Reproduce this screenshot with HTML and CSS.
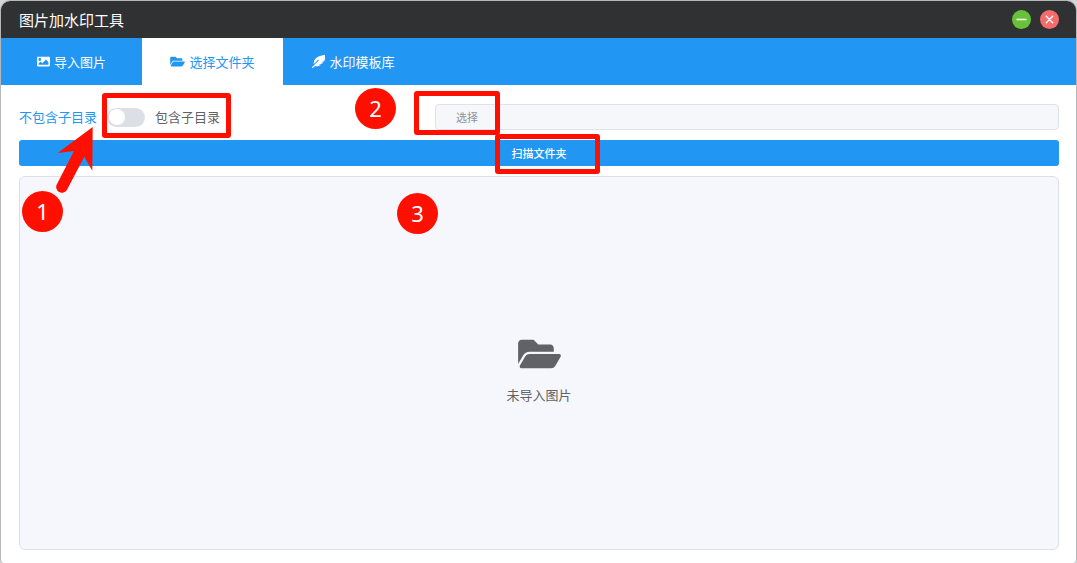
FILE: index.html
```html
<!DOCTYPE html>
<html lang="zh-CN">
<head>
  <meta charset="UTF-8" />
  <meta name="viewport" content="width=device-width, initial-scale=1" />
  <title>图片加水印工具</title>
  <link rel="stylesheet" href="styles.css">
</head>
<body>
  <div class="window">
    <header class="titlebar">
      <h1>图片加水印工具</h1>
      <div class="window-actions">
        <button type="button" class="round minimize" aria-label="最小化">
          <svg viewBox="0 0 19 19"><path d="M5 9.500h9" /></svg>
        </button>
        <button type="button" class="round close" aria-label="关闭">
          <svg viewBox="0 0 19 19"><path d="M6.300 6.300l6.400 6.400M12.700 6.300l-6.400 6.400" /></svg>
        </button>
      </div>
    </header>

    <nav class="tabs">
      <a href="#import" class="tab">
        <svg class="icon" viewBox="0 0 512 512"><path d="M464 448H48c-26.51 0-48-21.49-48-48V112c0-26.51 21.49-48 48-48h416c26.51 0 48 21.49 48 48v288c0 26.51-21.49 48-48 48zM112 120c-30.928 0-56 25.072-56 56s25.072 56 56 56 56-25.072 56-56-25.072-56-56-56zM64 384h384V272l-87.515-87.515c-4.686-4.686-12.284-4.686-16.971 0L208 320l-55.515-55.515c-4.686-4.686-12.284-4.686-16.971 0L64 336v48z" /></svg>
        <span>导入图片</span>
      </a>
      <a href="#folder" class="tab active">
        <svg class="icon wide" viewBox="0 0 576 512"><path d="M572.694 292.093L500.27 416.248A63.997 63.997 0 0 1 444.989 448H45.025c-18.523 0-30.064-20.093-20.731-36.093l72.424-124.155A64 64 0 0 1 152 256h399.964c18.523 0 30.064 20.093 20.73 36.093zM152 224h328v-48c0-26.51-21.49-48-48-48H272l-64-64H48C21.49 64 0 85.49 0 112v278.046l69.077-118.418C86.214 242.25 117.989 224 152 224z" /></svg>
        <span>选择文件夹</span>
      </a>
      <a href="#templates" class="tab">
        <svg class="icon" viewBox="0 0 512 512"><path d="M512 0C460.22 3.56 96.44 38.2 71.01 287.61c-3.09 26.66-4.84 53.44-5.99 80.24l178.87-178.69c6.25-6.25 16.4-6.25 22.65 0s6.25 16.38 0 22.63L7.04 471.03c-9.38 9.37-9.38 24.57 0 33.94 9.38 9.37 24.6 9.37 33.98 0l66.1-66.03C159.42 454.65 279 457.11 353 384h-98.19l147.57-49.14c49.99-49.93 36.38-36.18 46.31-46.86h-97.78l131.54-43.8C527.16 145.61 515.41 39.33 512 0z" /></svg>
        <span>水印模板库</span>
      </a>
    </nav>

    <main class="content">
      <div class="options">
        <div class="subdir">
          <label for="subdir" class="off">不包含子目录</label>
          <input type="checkbox" role="switch" id="subdir" class="switch">
          <label for="subdir">包含子目录</label>
          <span class="mark mark-switch"></span>
          <svg class="arrow" viewBox="0 0 40 68"><path d="M36.7 2L1.7 28L18 26L0.9 59.2A5.7 5.7 0 0 0 11 64.8L28.3 31.7L36.3 45.7Z" /></svg>
          <span class="step step-1">1</span>
          <span class="step step-2">2</span>
        </div>
        <div class="picker">
          <button type="button" class="choose">选择</button>
          <input type="text" class="path" aria-label="文件夹路径" readonly>
          <span class="mark mark-choose"></span>
        </div>
      </div>

      <button type="button" class="scan">扫描文件夹<span class="mark mark-scan"></span></button>

      <section class="empty">
        <svg class="empty-icon" viewBox="0 0 576 512"><path d="M572.694 292.093L500.27 416.248A63.997 63.997 0 0 1 444.989 448H45.025c-18.523 0-30.064-20.093-20.731-36.093l72.424-124.155A64 64 0 0 1 152 256h399.964c18.523 0 30.064 20.093 20.73 36.093zM152 224h328v-48c0-26.51-21.49-48-48-48H272l-64-64H48C21.49 64 0 85.49 0 112v278.046l69.077-118.418C86.214 242.25 117.989 224 152 224z" /></svg>
        <p>未导入图片</p>
        <span class="step step-3">3</span>
      </section>
    </main>
  </div>
</body>
</html>
```
FILE: styles.css
```css
* {
  box-sizing: border-box;
}

body {
  margin: 0;
  background: #d4d6d8;
  color: #606266;
  font-family: "Noto Sans", "Noto Sans CJK SC", sans-serif;
  font-size: 13px;
  line-height: 20px;
}

button, input {
  margin: 0;
  font-family: inherit;
}

.window {
  display: flex;
  flex-direction: column;
  min-height: 100vh;
  border: 1px solid #b5b7b9;
  border-bottom: 0;
  border-radius: 10px 10px 4px 4px;
  overflow: hidden;
  background: #fff;
}

.titlebar {
  display: flex;
  align-items: center;
  justify-content: space-between;
  height: 37px;
  padding: 0 17px 0 18px;
  background: #303133;
}

.titlebar h1 {
  margin: 0;
  color: #fff;
  font-size: 15px;
  font-weight: 400;
}

.window-actions {
  display: flex;
  gap: 9px;
}

.round {
  width: 19px;
  height: 19px;
  padding: 0;
  border: 0;
  border-radius: 50%;
}

.round svg {
  display: block;
  fill: none;
  stroke: #fff;
  stroke-width: 1.3;
  stroke-linecap: round;
}

.minimize {
  background: #67c23a;
}

.close {
  background: #f56c6c;
}

.tabs {
  display: flex;
  background: #2196f3;
}

.tab {
  display: flex;
  align-items: center;
  justify-content: center;
  gap: 4px;
  width: 141px;
  height: 47px;
  color: #fff;
  text-decoration: none;
}

.tab.active {
  background: #fff;
  color: #2196f3;
}

.icon {
  width: 13px;
  height: 13px;
  fill: currentColor;
}

.icon.wide {
  width: 15px;
}

.content {
  flex: 1;
  display: flex;
  flex-direction: column;
  gap: 10px;
  padding: 19px 17px 13px 18px;
}

.options {
  display: grid;
  grid-template-columns: 2fr 3fr;
}

.subdir {
  position: relative;
  display: flex;
  align-items: center;
  gap: 10px;
}

.off {
  color: #2196f3;
}

.switch {
  appearance: none;
  display: flex;
  align-items: center;
  width: 38px;
  height: 19px;
  padding: 0 2px;
  border-radius: 10px;
  background: #dcdfe6;
}

.switch::before {
  content: "";
  width: 16px;
  height: 16px;
  border-radius: 50%;
  background: #fff;
}

.switch:checked {
  justify-content: flex-end;
  background: #2196f3;
}

.picker {
  position: relative;
  display: flex;
  height: 26px;
  border: 1px solid #dfe2e9;
  border-radius: 4px;
  background: #f5f7fa;
}

.choose {
  padding: 0 20px;
  border: 0;
  border-right: 1px solid #dcdfe6;
  background: none;
  color: #909399;
  font-size: 11px;
}

.path {
  flex: 1;
  min-width: 0;
  padding: 0 10px;
  border: 0;
  background: none;
}

.scan {
  position: relative;
  height: 26px;
  border: 0;
  border-radius: 3px;
  background: #2196f3;
  color: #fff;
  font-size: 11px;
  font-weight: 500;
}

.empty {
  position: relative;
  flex: 1;
  display: flex;
  flex-direction: column;
  align-items: center;
  justify-content: center;
  gap: 12px;
  padding-top: 14px;
  border: 1px solid #dcdfe6;
  border-radius: 6px;
  background: #f5f7fc;
}

.empty-icon {
  width: 43px;
  height: 38px;
  fill: #606266;
}

.empty p {
  margin: 0;
}

/* guide marks drawn over the controls */
.mark, .step, .arrow {
  position: absolute;
  z-index: 2;
  pointer-events: none;
}

.mark {
  border: 5px solid #ff0f00;
  border-radius: 3px;
}

.mark-switch {
  top: -11px;
  left: 83px;
  width: 129px;
  height: 45px;
}

.mark-choose {
  top: -14px;
  left: -22px;
  width: 86px;
  height: 44px;
}

.mark-scan {
  top: -6px;
  left: calc(50% - 44px);
  width: 105px;
  height: 40px;
}

.step {
  width: 41px;
  height: 41px;
  border-radius: 50%;
  background: #ff0f00;
  color: #fff;
  font-size: 22px;
  line-height: 41px;
  text-align: center;
}

.step-1 {
  top: 87px;
  left: 3px;
}

.step-2 {
  top: -16px;
  right: 39px;
}

.step-3 {
  top: 16px;
  left: 377px;
}

.arrow {
  top: 21px;
  left: 37px;
  width: 40px;
  height: 68px;
  fill: #ff0f00;
}
```
